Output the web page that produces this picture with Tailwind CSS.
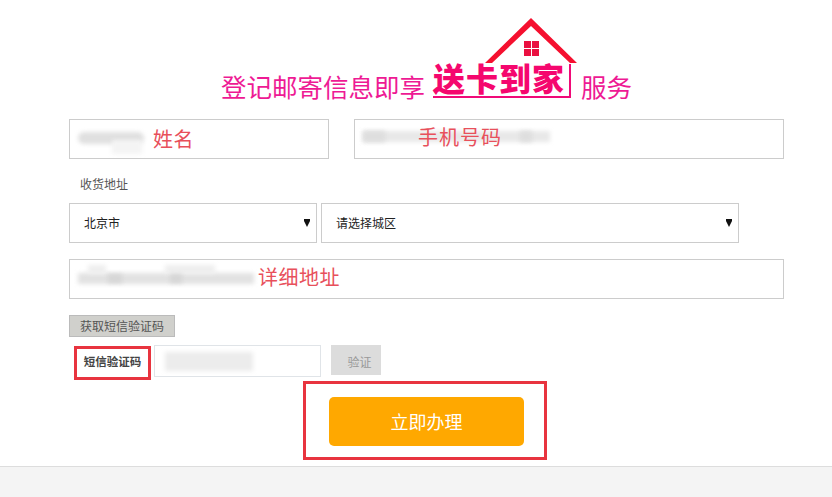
<!DOCTYPE html>
<html lang="zh-CN">
<head>
  <meta charset="UTF-8" />
  <title>送卡到家</title>
  <script src="https://cdn.jsdelivr.net/npm/@tailwindcss/browser@4"></script>
</head>
<body class="bg-white font-['Noto_Sans_CJK_SC','Liberation_Sans',sans-serif]">
  <div class="w-[832px] h-[497px] overflow-hidden flex flex-col">
    <!-- heading -->
    <div class="h-[119px] pl-[221px] pt-[18px] flex">
      <div class="mt-[51px] h-[34px] w-[212px] text-[25.5px] leading-[34px] whitespace-nowrap text-[#ee1a94]">登记邮寄信息即享</div>
      <div class="w-[148px] h-[81px] flex flex-col">
        <svg class="ml-[52px] w-[92px] h-[46px]" viewBox="0 0 92 46">
          <path d="M46 0L92 45H85L46 8L7 45H0Z" fill="#f5102f" />
          <path d="M39 23h7v7h-7zM47 23h7v7h-7zM39 31h7v7h-7zM47 31h7v7h-7z" fill="#ea1040" />
        </svg>
        <div class="h-[34px] w-[138px] border-b-2 border-r-2 border-[#f00a78] font-black text-[#f5076e] text-[32px] leading-[26px] tracking-[1px] whitespace-nowrap">送卡到家</div>
      </div>
      <div class="mt-[51px] h-[34px] text-[25.5px] leading-[34px] whitespace-nowrap text-[#ee1a94]">服务</div>
    </div>

    <div class="pl-[69px] flex-1">
      <!-- name + phone -->
      <div class="flex gap-[25px]">
        <div class="relative w-[260px] h-10 border border-[#ccc] flex items-center pl-[83px]">
          <div class="absolute left-[8px] top-[12px] w-[66px] h-[12px] rounded-full bg-[#e0e0e0] blur-[2px]"></div>
          <div class="absolute left-[42px] top-[20px] w-[30px] h-[14px] bg-[#f4f4f4] blur-[2px]"></div>
          <span class="relative text-[20px] tracking-[0.5px] text-[#e8505b]">姓名</span>
        </div>
        <div class="relative w-[430px] h-10 border border-[#ccc] flex items-center pl-[63px]">
          <div class="absolute left-2 top-[11px] w-[187px] h-[11px] bg-[#e8e8e8] blur-[2px]"></div>
          <div class="absolute left-2 top-[11px] w-[22px] h-[11px] bg-[#dedede] blur-[2px]"></div>
          <div class="absolute left-[165px] top-[11px] w-[12px] h-[11px] bg-[#dedede] blur-[2px]"></div>
          <span class="relative -mt-1 text-[20px] tracking-[1px] text-[#e8505b]">手机号码</span>
        </div>
      </div>

      <div class="h-11 pl-[11px] pt-[15px] text-[12px] leading-5 text-[#555]">收货地址</div>

      <!-- selects -->
      <div class="flex gap-[4px]">
        <div class="w-[248px] h-10 border border-[#ccc] flex items-center justify-between pl-[14px] pr-[6px] text-[12px] text-[#222]">
          <span>北京市</span>
          <svg class="w-[6px] h-[8px]" viewBox="0 0 6 8"><path d="M0 0H6V2L3 8L0 2Z" fill="#111" /></svg>
        </div>
        <div class="w-[418px] h-10 border border-[#ccc] flex items-center justify-between pl-[14px] pr-[6px] text-[12px] text-[#222]">
          <span>请选择城区</span>
          <svg class="w-[6px] h-[8px]" viewBox="0 0 6 8"><path d="M0 0H6V2L3 8L0 2Z" fill="#111" /></svg>
        </div>
      </div>

      <!-- address -->
      <div class="relative mt-4 w-[715px] h-10 border border-[#ccc] flex items-center pl-[188px]">
        <div class="absolute left-[8px] top-[13px] w-[176px] h-[11px] bg-[#e2e2e2] blur-[2px]"></div>
        <div class="absolute left-[18px] top-[5px] w-[18px] h-[9px] bg-[#eee] blur-[2px]"></div>
        <div class="absolute left-[95px] top-[5px] w-[50px] h-[9px] bg-[#eee] blur-[2px]"></div>
        <div class="absolute left-[38px] top-[14px] w-[14px] h-[9px] bg-[#d6d6d6] blur-[2px]"></div>
        <div class="absolute left-[100px] top-[14px] w-[12px] h-[9px] bg-[#d6d6d6] blur-[2px]"></div>
        <span class="relative -mt-1 text-[20px] tracking-[0.5px] text-[#e8505b]">详细地址</span>
      </div>

      <!-- sms -->
      <div class="mt-4 w-[106px] h-[22px] bg-[#d0d0cc] border border-[#bbb] text-[12px] leading-5 text-center text-[#555]">获取短信验证码</div>
      <div class="mt-2 h-9 flex items-start">
        <div class="ml-[5px] mt-px w-[77px] h-[34px] border-[3px] border-[#e8343f] text-[11.5px] font-bold leading-6 text-center text-[#444]">短信验证码</div>
        <div class="ml-[3px] w-[167px] h-8 border border-[#e0e4e8] flex items-center pl-[10px]">
          <div class="w-[88px] h-[19px] bg-[#ececec] blur-[2px]"></div>
        </div>
        <div class="ml-[10px] w-[50px] h-[30px] bg-[#dcdcdc] pl-[7px] text-[12px] leading-[34px] text-center text-[#999]">验证</div>
      </div>

      <!-- submit -->
      <div class="ml-[234px] w-[244px] h-[79px] border-[3px] border-[#e8343f] flex pl-[23px] pt-[13px]">
        <div class="w-[195px] h-[49px] rounded-[5px] bg-[#ffa800] text-[18px] leading-[49px] text-center text-white">立即办理</div>
      </div>
    </div>

    <div class="h-[31px] border-t border-[#ddd] bg-[#f4f4f4]"></div>
  </div>
</body>
</html>
